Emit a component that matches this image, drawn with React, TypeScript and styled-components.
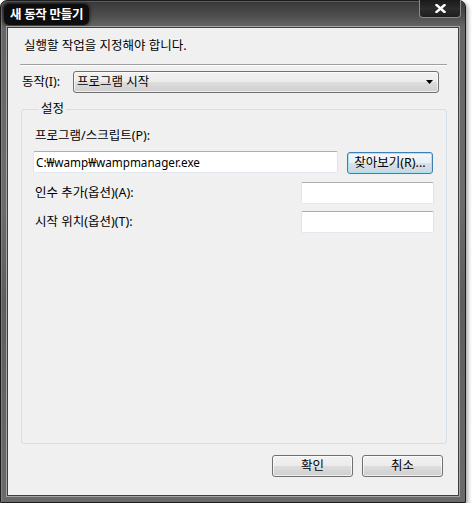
import React from 'react';
import styled, {createGlobalStyle, css} from 'styled-components';

const GlobalStyle = createGlobalStyle`
body {
    margin: 0;
    background: #ffffff;
}
* {
    box-sizing: border-box;
}
`;

const font = `"Noto Sans", "Noto Sans CJK KR", sans-serif`;

const Window = styled.div`
width: 466px;
height: 503px;
display: flex;
flex-direction: column;
padding: 0 6px 6px 6px;
border: 1px solid #1c1c1c;
border-radius: 7px 7px 0 0;
background: linear-gradient(180deg, #383838 0px, #4c4c4c 14px, #666666 26px, #6c6c6c 40%, #5e5e5e 60%, #6a6a6a 100%);
box-shadow: 2px 2px 4px rgba(0, 0, 0, 0.35), inset 1px 1px 0 rgba(255, 255, 255, 0.18);
font-family: ${font};
font-size: 12.5px;
color: #000000;
`;

const TitleBar = styled.div`
height: 26px;
display: flex;
align-items: flex-start;
justify-content: space-between;
`;

const TitleText = styled.div`
margin: 3px 0 0 -3px;
padding: 0 6px;
height: 21px;
line-height: 21px;
border-radius: 5px;
background: rgba(8, 8, 8, 0.92);
box-shadow: 0 0 3px 1px rgba(8, 8, 8, 0.6);
color: #ffffff;
font-weight: bold;
font-size: 12.5px;
letter-spacing: -0.3px;
`;

const CloseButton = styled.div`
margin: -1px -2px 0 0;
width: 42px;
height: 18px;
display: flex;
align-items: center;
justify-content: center;
border: 1px solid #8a8a8a;
border-top: none;
border-radius: 0 0 4px 4px;
background: linear-gradient(180deg, #1a1a1a 0%, #2c2c2c 50%, #1e1e1e 100%);
`;

const Client = styled.div`
flex: 1;
display: flex;
flex-direction: column;
padding: 0 11px 0 13px;
border: 1px solid #3e3e3e;
box-shadow: 0 0 0 1px #a4a4a4;
background: #f0f0f0;
`;

const Instruction = styled.div`
margin-top: 10px;
padding-left: 3px;
line-height: 16px;
`;

const Separator = styled.div`
margin: 10px 0 0 -1px;
height: 2px;
border-top: 1px solid #a0a0a0;
border-bottom: 1px solid #ffffff;
`;

const ActionRow = styled.div`
margin-top: 5px;
display: flex;
align-items: center;
`;

const ActionLabel = styled.span`
width: 51px;
margin-left: 1px;
line-height: 16px;
`;

const buttonFace = css`
border: 1px solid #707070;
border-radius: 3px;
background: linear-gradient(180deg, #f2f2f2 0%, #ebebeb 50%, #dddddd 51%, #cfcfcf 100%);
box-shadow: inset 0 0 0 1px rgba(255, 255, 255, 0.7);
`;

const Combo = styled.div`
${buttonFace};
flex: 1;
margin-right: 8px;
height: 22px;
display: flex;
align-items: center;
justify-content: space-between;
padding: 0 5px 0 3px;
line-height: 16px;
`;

const Group = styled.fieldset`
flex: 1;
margin: 8px 0 0 0;
min-width: 0;
padding: 11px 12px 0 11px;
border: 1px solid #d5dfe5;
border-radius: 3px;
display: flex;
flex-direction: column;
`;

const Legend = styled.legend`
margin-left: 6px;
padding: 0 2px;
line-height: 16px;
`;

const FieldLabel = styled.span`
padding-left: 2px;
line-height: 16px;
`;

const PathRow = styled.div`
margin-top: 7px;
display: flex;
align-items: flex-start;
gap: 9px;
height: 23px;
`;

const OptionRow = styled.div<{$gap: number}>`
margin-top: ${p => p.$gap}px;
display: flex;
align-items: center;
justify-content: space-between;
`;

const TextBox = styled.div<{$width?: number}>`
${p => (p.$width ? `width: ${p.$width}px;` : 'flex: 1;')}
height: 22px;
padding: 0 2px;
line-height: 20px;
font-size: 11.7px;
background: #ffffff;
border: 1px solid #e2e3ea;
border-top-color: #abadb3;
border-bottom-color: #e3e9ef;
border-radius: 2px;
white-space: nowrap;
overflow: hidden;
`;

const PushButton = styled.div<{$width: number; $focused?: boolean}>`
${buttonFace};
width: ${p => p.$width}px;
height: 22px;
display: flex;
align-items: center;
justify-content: center;
line-height: 16px;
${p => p.$focused && css`
    margin: 1px 1px 0 0;
    border-color: #3c7fb1;
    background: linear-gradient(180deg, #f4f8fb 0%, #e9eff4 50%, #d9e2e9 51%, #ccd6de 100%);
    box-shadow: inset 0 0 0 1px #a6e2f8;
`}
`;

const Footer = styled.div`
margin: 11px 4px 18px 0;
display: flex;
justify-content: flex-end;
gap: 9px;
`;

function CloseGlyph() {
    return (
        <svg width='11' height='9' viewBox='0 0 11 9'>
            <path d='M1.5 1 L9.5 8 M9.5 1 L1.5 8' stroke='#ffffff' strokeWidth='2.4' strokeLinecap='square'/>
        </svg>
    );
}

function DropArrow() {
    return (
        <svg width='7' height='4' viewBox='0 0 7 4'>
            <polygon points='0,0 7,0 3.5,4' fill='#000000'/>
        </svg>
    );
}

export default function App() {
    return (
        <>
            <GlobalStyle/>
            <Window>
                <TitleBar>
                    <TitleText>{'새 동작 만들기'}</TitleText>
                    <CloseButton>
                        <CloseGlyph/>
                    </CloseButton>
                </TitleBar>
                <Client>
                    <Instruction>{'실행할 작업을 지정해야 합니다.'}</Instruction>
                    <Separator/>
                    <ActionRow>
                        <ActionLabel>{'동작(I):'}</ActionLabel>
                        <Combo>
                            <span>{'프로그램 시작'}</span>
                            <DropArrow/>
                        </Combo>
                    </ActionRow>
                    <Group>
                        <Legend>{'설정'}</Legend>
                        <FieldLabel>{'프로그램/스크립트(P):'}</FieldLabel>
                        <PathRow>
                            <TextBox>{'C:₩wamp₩wampmanager.exe'}</TextBox>
                            <PushButton
                                $width={86}
                                $focused={true}
                            >
                                {'찾아보기(R)...'}
                            </PushButton>
                        </PathRow>
                        <OptionRow $gap={8}>
                            <FieldLabel>{'인수 추가(옵션)(A):'}</FieldLabel>
                            <TextBox $width={133}/>
                        </OptionRow>
                        <OptionRow $gap={7}>
                            <FieldLabel>{'시작 위치(옵션)(T):'}</FieldLabel>
                            <TextBox $width={133}/>
                        </OptionRow>
                    </Group>
                    <Footer>
                        <PushButton $width={81}>{'확인'}</PushButton>
                        <PushButton $width={81}>{'취소'}</PushButton>
                    </Footer>
                </Client>
            </Window>
        </>
    );
}
